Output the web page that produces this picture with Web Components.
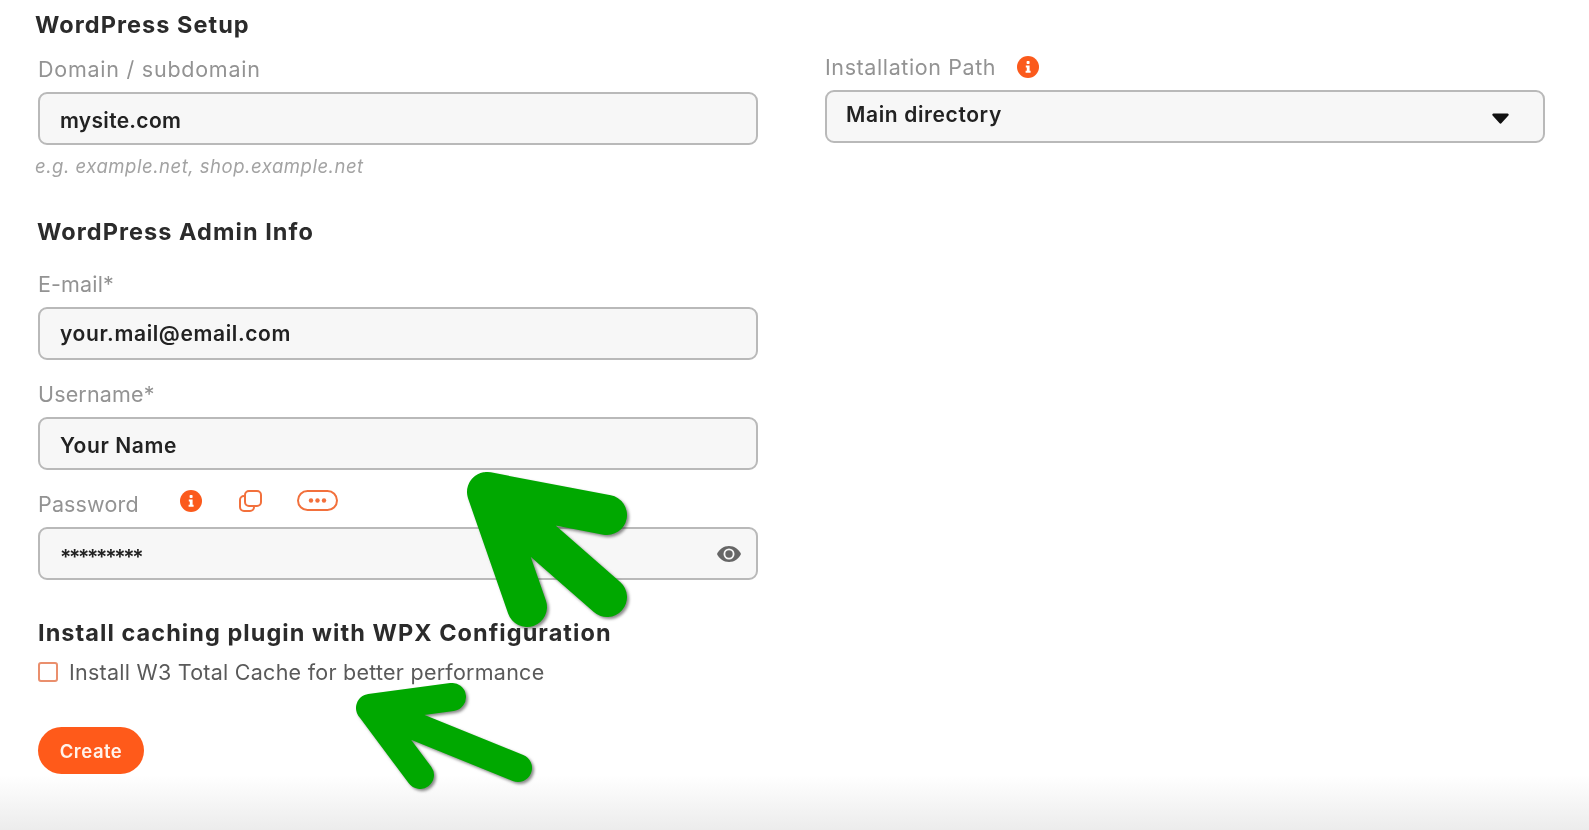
<!DOCTYPE html>
<html lang="en">
<head>
<meta charset="utf-8">
<title>WordPress Setup</title>
<style>
  html, body { margin: 0; padding: 0; background: #fff; }
  body { font-family: Inter, "Open Sans", "Liberation Sans", sans-serif; overflow: hidden; }
</style>
</head>
<body>
<wp-page>
  <div slot="left">
    <wp-title style="--top:10px;--left:-3px">WordPress Setup</wp-title>
    <wp-field label="Domain / subdomain" value="mysite.com" hint="e.g. example.net, shop.example.net"
      style="--label-top:17px;--label-ls:.75px;--value-ls:.3px;--value-shift:4px 0 0"></wp-field>
    <wp-title style="--top:41px;--left:-1px">WordPress Admin Info</wp-title>
    <wp-field label="E-mail*" value="your.mail@email.com" style="--label-top:25px"></wp-field>
    <wp-field label="Username*" value="Your Name" style="--label-top:22px;--value-shift:4px 0 0"></wp-field>
    <wp-field label="Password" value="*********" style="--label-top:22px;--value-shift:8px 0 0;--value-ls:-2.3px">
      <span slot="tools" style="display:inline-flex;align-items:center;margin-bottom:7px">
        <wp-icon name="info" style="margin-left:41px"></wp-icon>
        <wp-icon name="copy" style="margin-left:37px"></wp-icon>
        <wp-icon name="dots" style="margin-left:35px"></wp-icon>
      </span>
      <wp-icon slot="end" name="eye"></wp-icon>
    </wp-field>
    <wp-title style="--top:38px">Install caching plugin with WPX Configuration</wp-title>
    <wp-check>Install W3 Total Cache for better performance</wp-check>
    <wp-button>Create</wp-button>
  </div>
  <div slot="right">
    <wp-field label="Installation Path" value="Main directory"
      style="--label-top:55px;--label-ls:.6px;--value-shift:0 0 4px;--box-pad:19px">
      <wp-icon slot="tools" name="info" style="margin-left:21px"></wp-icon>
      <wp-icon slot="end" name="caret" style="margin:4px 19px 0 0"></wp-icon>
    </wp-field>
  </div>
  <green-arrow slot="over" x="440" y="450" w="200" h="180" width="40"
    d="M527 607 L487 492 L607 515 M487 492 L607 597"></green-arrow>
  <green-arrow slot="over" x="340" y="670" w="200" h="125" width="28"
    d="M420 775 L370 708 L452 697 M370 708 L518 768"></green-arrow>
</wp-page>

<script>
// page shell: two columns plus the arrows painted over them
class WpPage extends HTMLElement {
  constructor() {
    super();
    this.attachShadow({ mode: "open" }).innerHTML = `
      <style>
        :host {
          display: block; position: relative; width: 1589px; height: 830px; overflow: hidden;
          background: linear-gradient(to bottom, #fff 0, #fff 775px, #ececec 830px);
        }
        .cols {
          display: grid; grid-template-columns: 720px 720px; column-gap: 67px;
          padding-left: 38px; filter: blur(.6px);
        }
      </style>
      <div class="cols">
        <slot name="left"></slot>
        <slot name="right"></slot>
      </div>
      <slot name="over"></slot>`;
  }
}
customElements.define("wp-page", WpPage);

class WpTitle extends HTMLElement {
  constructor() {
    super();
    this.attachShadow({ mode: "open" }).innerHTML = `
      <style>
        :host {
          display: block; margin: var(--top, 0) 0 0 var(--left, 0); height: 30px; line-height: 30px;
          font-size: 23.5px; font-weight: 700; letter-spacing: 1.05px; color: #2b2b2b; white-space: nowrap;
        }
      </style>
      <slot></slot>`;
  }
}
customElements.define("wp-title", WpTitle);

const fieldTpl = document.createElement("template");
fieldTpl.innerHTML = `
  <style>
    :host { display: block; margin-top: var(--label-top, 0); }
    .head {
      display: flex; align-items: center; height: 24px; margin-bottom: 11px;
      font-size: 21.5px; line-height: 24px; color: #939393;
      letter-spacing: var(--label-ls, .15px); white-space: nowrap;
    }
    .box {
      display: flex; align-items: center; justify-content: space-between;
      box-sizing: border-box; height: 53px; padding: 0 15px 0 var(--box-pad, 20px);
      background: #f7f7f7; border: 2px solid #b9b9b9; border-radius: 9px;
    }
    .value {
      font-size: 21px; font-weight: 600; color: #222; white-space: nowrap;
      letter-spacing: var(--value-ls, .62px); margin: var(--value-shift, 0);
    }
    .hint {
      margin: 11px 0 0 -3px; height: 20px; line-height: 20px; font-size: 18.5px;
      font-style: italic; letter-spacing: .53px; color: #a3a3a3; white-space: nowrap;
    }
    .hint:empty { display: none; }
  </style>
  <div class="head"><span class="label"></span><slot name="tools"></slot></div>
  <div class="box"><span class="value"></span><slot name="end"></slot></div>
  <div class="hint"></div>`;

class WpField extends HTMLElement {
  constructor() {
    super();
    this.attachShadow({ mode: "open" });
    this.shadowRoot.appendChild(fieldTpl.content.cloneNode(true));
    this.shadowRoot.querySelector(".label").innerText = this.getAttribute("label");
    this.shadowRoot.querySelector(".value").innerText = this.getAttribute("value");
    this.shadowRoot.querySelector(".hint").innerText = this.getAttribute("hint") || "";
  }
}
customElements.define("wp-field", WpField);

const ICONS = {
  info: `<svg width="22" height="22" viewBox="0 0 22 22"><circle cx="11" cy="11" r="11" fill="#fb5a1c"/>
    <rect x="9.6" y="5" width="3" height="3" rx=".8" fill="#fff"/>
    <path d="M8.8 9.6h3.8v5.2h1v2h-5v-2h1.2v-3.2h-1z" fill="#fff"/></svg>`,
  copy: `<svg width="23" height="22" viewBox="0 0 23 22" fill="none" stroke="#f2703c" stroke-width="2">
    <rect x="6" y="1" width="16" height="15" rx="4"/>
    <path d="M6 6H5A4 4 0 0 0 1 10V17A4 4 0 0 0 5 21H11A4 4 0 0 0 15 17V16"/></svg>`,
  dots: `<svg width="41" height="21" viewBox="0 0 41 21"><rect x="1" y="1" width="39" height="19" rx="9.500" fill="none" stroke="#f2703c" stroke-width="2"/>
    <circle cx="14" cy="10.500" r="2.200" fill="#f2703c"/><circle cx="20.500" cy="10.500" r="2.200" fill="#f2703c"/><circle cx="27" cy="10.500" r="2.200" fill="#f2703c"/></svg>`,
  eye: `<svg width="24" height="16" viewBox="0 0 24 16"><path d="M12 0C6.500 0 2.200 3.300 0 8c2.200 4.700 6.500 8 12 8s9.800-3.300 12-8c-2.200-4.700-6.500-8-12-8z" fill="#666"/>
    <circle cx="12" cy="8" r="5.500" fill="#f7f7f7"/><circle cx="12" cy="8" r="3.700" fill="#666"/></svg>`,
  caret: `<svg width="17" height="11" viewBox="0 0 17 11"><path d="M1.500 0.500h14a1.200 1.200 0 0 1 .9 2l-6.800 7.600a1.500 1.500 0 0 1-2.200 0L.6 2.500a1.200 1.200 0 0 1 .9-2z" fill="#111"/></svg>`
};

class WpIcon extends HTMLElement {
  constructor() {
    super();
    this.attachShadow({ mode: "open" }).innerHTML = `
      <style>:host { display: inline-flex; align-items: center; vertical-align: middle; }
      svg { display: block; }</style>
      ${ICONS[this.getAttribute("name")]}`;
  }
}
customElements.define("wp-icon", WpIcon);

class WpCheck extends HTMLElement {
  constructor() {
    super();
    this.attachShadow({ mode: "open" }).innerHTML = `
      <style>
        :host {
          display: flex; align-items: center; gap: 11px; margin-top: 12px; height: 24px;
          font-size: 21.5px; letter-spacing: .25px; color: #5a5a5a; white-space: nowrap;
        }
        .box {
          box-sizing: border-box; width: 20px; height: 20px; background: #fff;
          border: 2px solid #ea8f6d; border-radius: 3px;
        }
      </style>
      <span class="box"></span><slot></slot>`;
  }
}
customElements.define("wp-check", WpCheck);

class WpButton extends HTMLElement {
  constructor() {
    super();
    this.attachShadow({ mode: "open" }).innerHTML = `
      <style>
        :host {
          display: flex; align-items: center; justify-content: center;
          width: 106px; height: 47px; margin-top: 43px; border-radius: 24px;
          background: #ff5a1a; color: #fff2ea; font-size: 18.500px; font-weight: 600;
          letter-spacing: .5px;
        }
      </style>
      <slot></slot>`;
  }
}
customElements.define("wp-button", WpButton);

// hand drawn annotation arrows, free on top of the form
class GreenArrow extends HTMLElement {
  constructor() {
    super();
    const x = +this.getAttribute("x"), y = +this.getAttribute("y");
    const w = +this.getAttribute("w"), h = +this.getAttribute("h");
    this.attachShadow({ mode: "open" }).innerHTML = `
      <style>
        :host { position: absolute; left: ${x}px; top: ${y}px; width: ${w}px; height: ${h}px; }
        svg { display: block; overflow: visible; filter: drop-shadow(2px 2px 1.500px rgba(40,40,40,.55)); }
      </style>
      <svg width="${w}" height="${h}" viewBox="${x} ${y} ${w} ${h}">
        <path d="${this.getAttribute("d")}" fill="none" stroke="#00a800"
          stroke-width="${this.getAttribute("width")}" stroke-linecap="round" stroke-linejoin="round"/>
      </svg>`;
  }
}
customElements.define("green-arrow", GreenArrow);
</script>
</body>
</html>
